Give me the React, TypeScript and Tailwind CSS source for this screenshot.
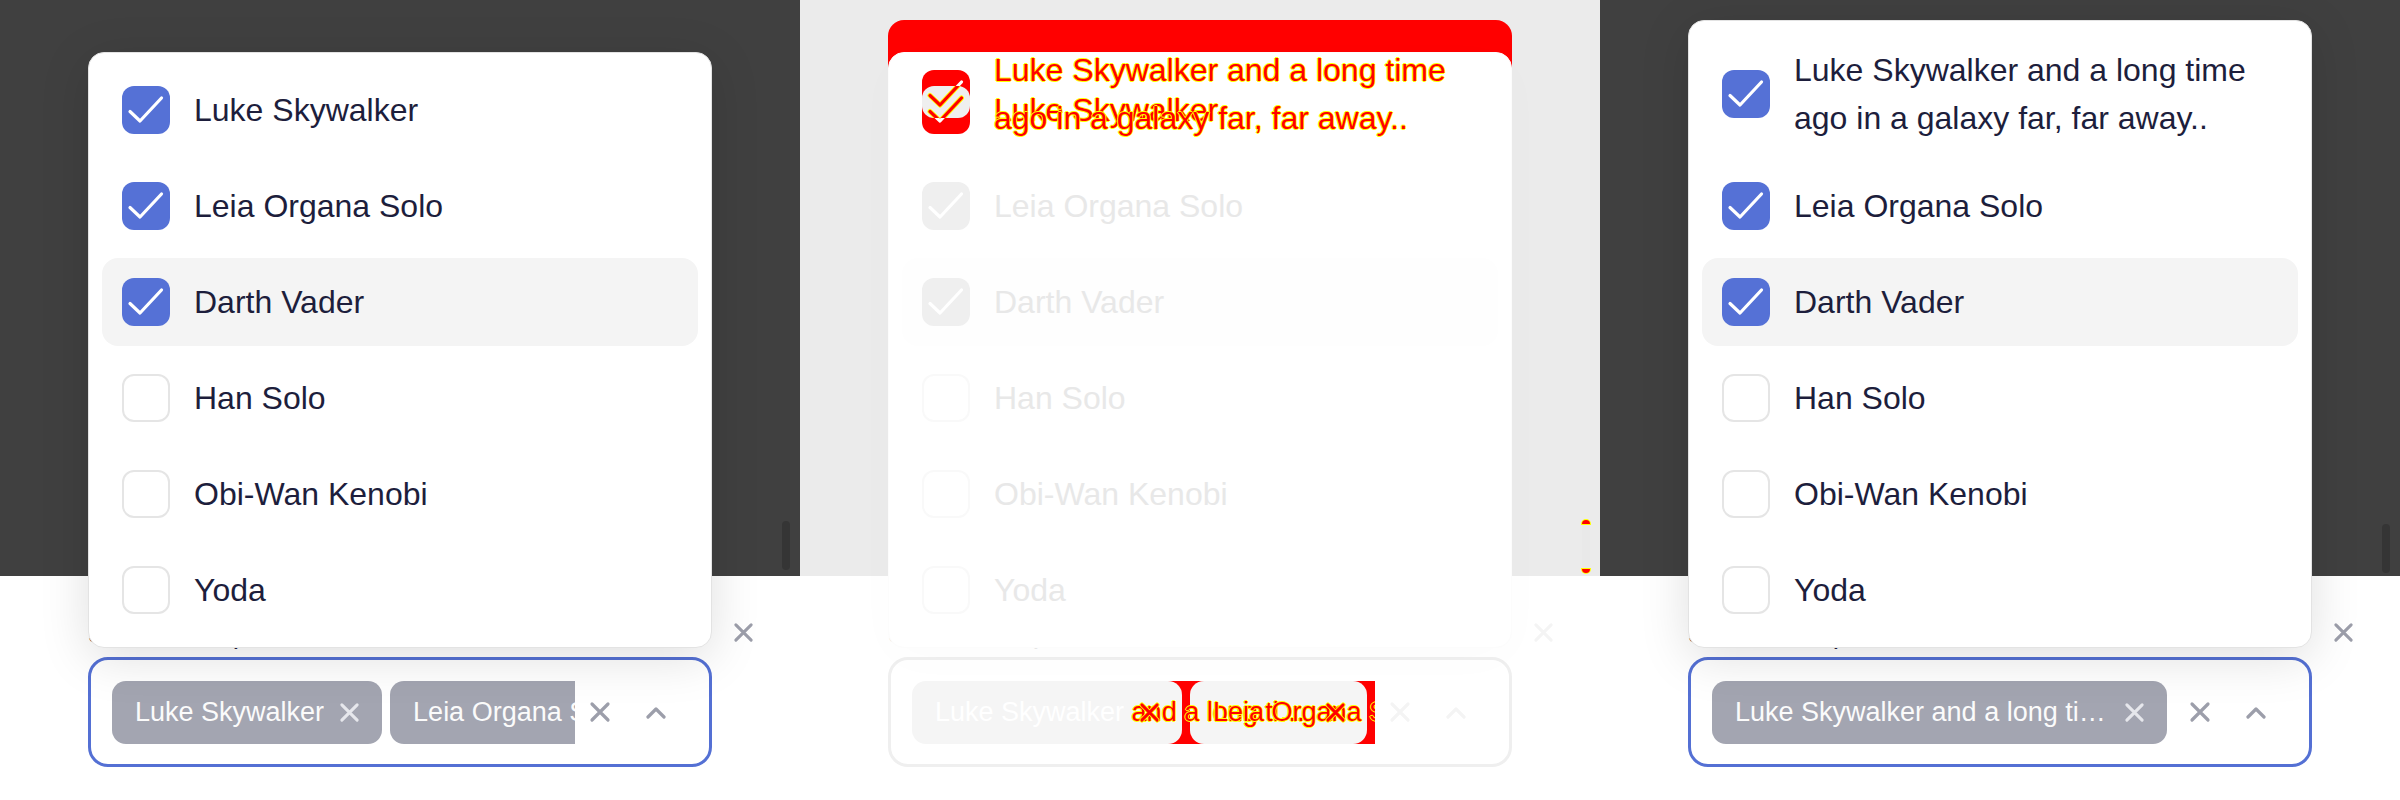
import React from "react"

type Variant = "base" | "long" | "diff"

const LONG = "Luke Skywalker and a long time ago in a galaxy far, far away.."
const NAMES = ["Luke Skywalker", "Leia Organa Solo", "Darth Vader", "Han Solo", "Obi-Wan Kenobi", "Yoda"]
const CHECKED = [true, true, true, false, false, false]

const tones = {
  normal: {
    top: "bg-[#404040]",
    thumb: "bg-[#353535]",
    text: "text-[#1d1e3c]",
    box: "bg-[#5571d6]",
    emptyBox: "border-[#e5e5e5]",
    hover: "bg-[#f4f4f4]",
    card: "border-[#e3e3e3] shadow-[0_10px_50px_rgba(0,0,0,0.13)]",
    input: "border-[#5470d4]",
    chip: "bg-[#a3a5b1] text-[#fbfbfb]",
    chipIcon: "text-[#e6e7ec]",
    icon: "text-[#9c9eaa]",
  },
  faded: {
    top: "bg-[#ebebeb]",
    thumb: "bg-[#e9e9e9]",
    text: "text-[#e8e8e8]",
    box: "bg-[#efefef]",
    emptyBox: "border-[#f9f9f9]",
    hover: "bg-[#fefefe]",
    card: "border-[#fcfcfc] shadow-[0_10px_50px_rgba(0,0,0,0.015)]",
    input: "border-[#efefef]",
    chip: "bg-[#f5f5f5] text-white",
    chipIcon: "text-white",
    icon: "text-[#f4f4f4]",
  },
}

const RED = "text-[#ff0000] [text-shadow:1px_0_0_#ff0,-1px_0_0_#ff0,0_1px_0_#ff0,0_-1px_0_#ff0]"

function XIcon({ className }: { className?: string }) {
  return (
    <svg viewBox="0 0 22 22" className={className} fill="none" stroke="currentColor" strokeWidth={3.2} strokeLinecap="round">
      <path d="M3 3L19 19M19 3L3 19" />
    </svg>
  )
}

function RedX({ className }: { className?: string }) {
  return (
    <svg viewBox="0 0 22 22" className={className} fill="none" strokeLinecap="round">
      <path d="M3 3L19 19M19 3L3 19" stroke="#ffff00" strokeWidth={5} />
      <path d="M3 3L19 19M19 3L3 19" stroke="#ff0000" strokeWidth={3} />
    </svg>
  )
}

function Chevron({ className }: { className?: string }) {
  return (
    <svg viewBox="0 0 22 13" className={className} fill="none" stroke="currentColor" strokeWidth={3.2} strokeLinecap="round" strokeLinejoin="round">
      <path d="M3 11L11 3L19 11" />
    </svg>
  )
}

function Check() {
  return (
    <svg viewBox="0 0 48 48" className="w-12 h-12" fill="none" stroke="#fff" strokeWidth={3.2} strokeLinecap="round" strokeLinejoin="round">
      <path d="M8 25.5L18 35L39.5 12" />
    </svg>
  )
}

function Card({ variant }: { variant: Variant }) {
  const t = variant === "diff" ? tones.faded : tones.normal
  return (
    <div className={`absolute left-[88px] bottom-[152px] w-[624px] rounded-[16px] border bg-white p-[13px] flex flex-col gap-2 ${t.card}`}>
      {NAMES.map((name, i) => {
        const label = i === 0 && variant === "long" ? LONG : name
        return (
          <div
            key={name}
            className={`flex items-center gap-6 rounded-[16px] px-5 py-3 min-h-[88px] ${i === 2 ? t.hover : ""}`}
          >
            {CHECKED[i] ? (
              <div className={`w-12 h-12 shrink-0 rounded-[12px] ${t.box}`}>
                <Check />
              </div>
            ) : (
              <div className={`w-12 h-12 shrink-0 rounded-[12px] border-2 bg-white ${t.emptyBox}`} />
            )}
            <span className={`text-[32px] leading-[48px] ${i === 0 && variant === "diff" ? "text-transparent" : t.text}`}>
              {label}
            </span>
          </div>
        )
      })}
    </div>
  )
}

function DiffMarks() {
  return (
    <>
      {/* first row texts */}
      <div className={`absolute left-[194px] top-[86px] whitespace-nowrap text-[32px] leading-[48px] ${RED}`}>Luke Skywalker</div>
      <div className={`absolute left-[194px] top-[46px] w-[484px] text-[32px] leading-[48px] ${RED}`}>{LONG}</div>

      {/* first row checkbox */}
      <svg className="absolute left-[122px] top-[70px] w-[48px] h-[64px]" viewBox="0 0 48 64" fill="none">
        <defs>
          <clipPath id="mid">
            <rect x="0" y="16" width="48" height="32" rx="12" />
          </clipPath>
        </defs>
        <rect x="0" y="0" width="48" height="48" rx="12" fill="#ff0000" />
        <rect x="0" y="16" width="48" height="48" rx="12" fill="#ff0000" />
        <path d="M8 25.5L18 35L39.5 12" stroke="#fff" strokeWidth={3.2} strokeLinecap="round" strokeLinejoin="round" />
        <path d="M8 41.5L18 51L39.5 28" stroke="#fff" strokeWidth={3.2} strokeLinecap="round" strokeLinejoin="round" />
        <rect x="0" y="16" width="48" height="32" rx="12" fill="#efefef" />
        <g clipPath="url(#mid)" strokeLinecap="round" strokeLinejoin="round">
          <path d="M8 25.5L18 35L39.5 12M8 41.5L18 51L39.5 28" stroke="#ffff00" strokeWidth={5} />
          <path d="M8 25.5L18 35L39.5 12M8 41.5L18 51L39.5 28" stroke="#ff0000" strokeWidth={3.2} />
        </g>
      </svg>

      {/* chip gaps */}
      <svg className="absolute left-[368px] top-[680.5px] w-[36px] h-[63px]" viewBox="0 0 36 63">
        <defs>
          <mask id="gap">
            <rect width="36" height="63" fill="#fff" />
            <rect x="-100" width="114" height="63" rx="14" fill="#000" />
            <rect x="22" width="100" height="63" rx="14" fill="#000" />
          </mask>
        </defs>
        <rect width="36" height="63" fill="#ff0000" mask="url(#gap)" />
      </svg>
      <svg className="absolute left-[553px] top-[680.5px] w-[22px] h-[63px]" viewBox="0 0 22 63">
        <defs>
          <mask id="tail">
            <rect width="22" height="63" fill="#fff" />
            <rect x="-100" width="114" height="63" rx="14" fill="#000" />
          </mask>
        </defs>
        <rect width="22" height="63" fill="#ff0000" mask="url(#tail)" />
      </svg>

      {/* chip texts */}
      <div className={`absolute left-[135px] top-[680.5px] w-[374px] overflow-hidden whitespace-nowrap text-ellipsis text-[27px] leading-[63px] ${RED}`}>
        <span className="text-transparent [text-shadow:none]">Luke Skywalker</span> and a long time ago in a galaxy far, far away..
      </div>
      <div className={`absolute left-[413px] top-[680.5px] w-[162px] overflow-hidden whitespace-nowrap text-[27px] leading-[63px] ${RED}`}>
        Leia Organa Solo
      </div>
      <RedX className="absolute left-[339px] top-[701.5px] w-[21px] h-[21px]" />
      <RedX className="absolute left-[525px] top-[701.5px] w-[21px] h-[21px]" />

      {/* scrollbar offset */}
      <div className="absolute left-[782px] top-[520px] w-[8px] h-[4px] rounded-t-full bg-[#ff0000] ring-1 ring-[#ffff00]" />
      <div className="absolute left-[782px] top-[569px] w-[8px] h-[4px] rounded-b-full bg-[#ff0000] ring-1 ring-[#ffff00]" />
    </>
  )
}

function Panel({ variant }: { variant: Variant }) {
  const diff = variant === "diff"
  const long = variant === "long"
  const t = diff ? tones.faded : tones.normal
  const chips = long ? [LONG] : ["Luke Skywalker", "Leia Organa Solo"]

  return (
    <div className="relative w-[800px] h-[800px] shrink-0 overflow-hidden bg-white">
      <div className={`h-[576px] flex justify-end items-end pr-[10px] ${long ? "pb-[3px]" : "pb-[6px]"} ${t.top}`}>
        <div className={`w-[8px] h-[49px] rounded-full ${t.thumb}`} />
      </div>

      <div className="pt-[44px] pl-[88px]">
        <div className="flex items-start h-[28px]">
          <span className={`w-[624px] text-[28px] leading-[28px] ${t.text}`}>Select multiple</span>
          <XIcon className={`ml-[21px] mt-[2px] w-[21px] h-[21px] shrink-0 ${t.icon}`} />
        </div>
        <div className={`mt-[9px] w-[624px] h-[110px] rounded-[20px] border-[3px] flex items-center pl-[21px] ${t.input}`}>
          <div className="w-[463px] shrink-0 flex gap-2 overflow-hidden">
            {chips.map((c) => (
              <div
                key={c}
                className={`h-[63px] max-w-[455px] shrink-0 rounded-[14px] flex items-center gap-[15px] pl-[23px] pr-[22px] ${t.chip}`}
              >
                <span className="truncate min-w-0 text-[27px] leading-[32px]">{c}</span>
                <XIcon className={`w-[21px] h-[21px] shrink-0 ${t.chipIcon}`} />
              </div>
            ))}
          </div>
          <XIcon className={`ml-[14px] w-[22px] h-[22px] shrink-0 ${t.icon}`} />
          <Chevron className={`ml-[34px] w-[22px] h-[13px] shrink-0 ${t.icon}`} />
        </div>
      </div>

      {diff && <div className="absolute left-[88px] top-[20px] w-[624px] h-[48px] rounded-t-[16px] bg-[#ff0000]" />}
      <Card variant={variant} />
      {diff && <DiffMarks />}
    </div>
  )
}

export default function App() {
  return (
    <div className="flex w-[2400px] h-[800px] bg-white font-['Liberation_Sans',Arial,sans-serif]">
      <Panel variant="base" />
      <Panel variant="diff" />
      <Panel variant="long" />
    </div>
  )
}
